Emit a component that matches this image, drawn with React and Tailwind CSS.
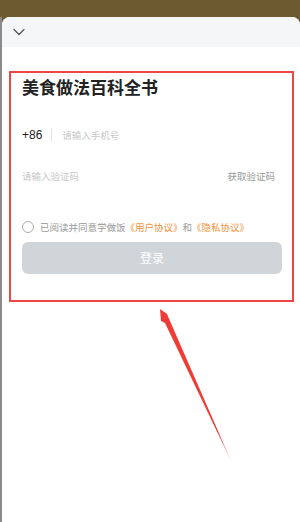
import React from "react";

const font = { fontFamily: '"Noto Sans CJK SC", "Noto Sans", sans-serif' };

function Chevron() {
  return (
    <svg width="12" height="8" viewBox="0 0 12 8" fill="none">
      <path d="M1 1.5 L6 6.5 L11 1.5" stroke="#555" strokeWidth="1.3" strokeLinecap="round" strokeLinejoin="round" />
    </svg>
  );
}

function Arrow() {
  return (
    <svg
      className="pointer-events-none absolute left-0 top-0"
      width="300"
      height="522"
      viewBox="0 0 300 522"
    >
      <defs>
        <linearGradient id="fade" x1="161" y1="310" x2="232" y2="463" gradientUnits="userSpaceOnUse">
          <stop offset="0" stopColor="#ef3b36" />
          <stop offset="0.8" stopColor="#ef3b36" />
          <stop offset="1" stopColor="#ef3b36" stopOpacity="0.3" />
        </linearGradient>
      </defs>
      <polygon points="160,309 167,314 170,321 232,463 165,323 161,321" fill="url(#fade)" />
    </svg>
  );
}

export default function App() {
  return (
    <div className="relative h-[522px] w-[300px] overflow-hidden bg-[#6c5a30]" style={font}>
      <div className="h-[17px]" />
      <div className="flex h-[505px]">
        <div className="w-[2px] bg-[#8a8a8a]" />
        <div className="flex flex-1 flex-col overflow-hidden rounded-t-[8px] bg-white">
          {/* header */}
          <div className="flex h-[30px] items-center bg-[#f5f6f7] pl-[11px]">
            <Chevron />
          </div>

          {/* highlighted form */}
          <div className="ml-[7px] mr-[6px] mt-[24px] h-[231px] border-2 border-[#ec4646] pl-[11px] pr-[10px]">
            <h1 className="mt-[2px] text-[17px] font-bold leading-[24px] text-[#222]">
              美食做法百科全书
            </h1>

            <div className="mt-[28px] flex h-[16px] items-center">
              <span className="text-[12px] text-[#222]" style={{ fontFamily: '"Liberation Sans", sans-serif' }}>
                +86
              </span>
              <span className="ml-[9px] h-[14px] w-px bg-[#e5e5e5]" />
              <span className="ml-[10px] text-[9.5px] text-[#c8c8c8]">请输入手机号</span>
            </div>

            <div className="mt-[25px] flex h-[16px] items-center justify-between pr-[7px]">
              <span className="text-[9.5px] text-[#c8c8c8]">请输入验证码</span>
              <span className="text-[9.5px] text-[#999]">获取验证码</span>
            </div>

            <div className="mt-[36px] flex items-center">
              <span className="h-[12px] w-[12px] rounded-full border border-[#aaa]" />
              <span className="ml-[6px] text-[9.5px] leading-[14px] text-[#999]">
                已阅读并同意学做饭
                <span className="text-[#f0923a]">《用户协议》</span>
                和
                <span className="text-[#f0923a]">《隐私协议》</span>
              </span>
            </div>

            <button className="mt-[8px] flex h-[32px] w-full items-center justify-center rounded-[6px] bg-[#cfd5d9] text-[12px] text-white">
              登录
            </button>
          </div>
          <div className="flex-1" />
        </div>
      </div>
      <Arrow />
    </div>
  );
}
